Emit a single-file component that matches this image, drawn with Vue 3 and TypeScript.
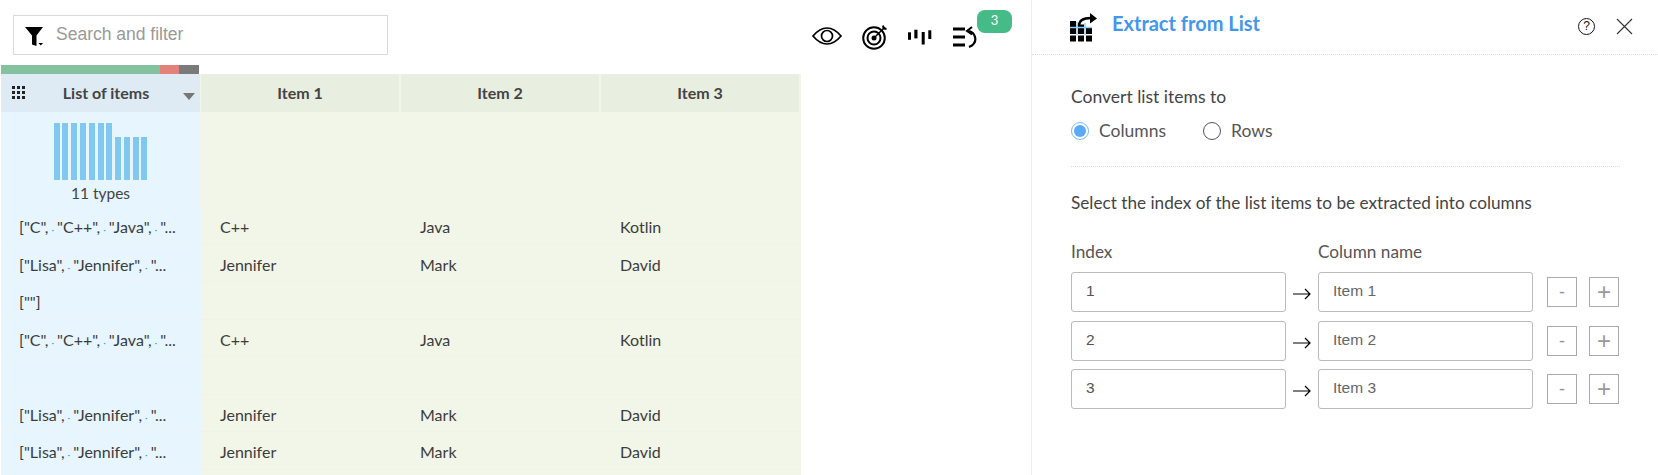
<script setup lang="ts">
const summaryBars = [57, 57, 57, 57, 57, 57, 57, 43, 43, 43, 43]
const headers = ['Item 1', 'Item 2', 'Item 3']

const cSet = ['C++', 'Java', 'Kotlin']
const nameSet = ['Jennifer', 'Mark', 'David']
const langs = ['["C",', '"C++",', '"Java",', '"...']
const names = ['["Lisa",', '"Jennifer",', '"...']
const blank = ['', '', '']

const rows = [
  { parts: langs, cells: cSet },
  { parts: names, cells: nameSet },
  { parts: ['[""]'], cells: blank },
  { parts: langs, cells: cSet },
  { parts: [], cells: blank },
  { parts: names, cells: nameSet },
  { parts: names, cells: nameSet },
  { parts: [], cells: blank },
]

const extractRows = [
  { index: '1', name: 'Item 1' },
  { index: '2', name: 'Item 2' },
  { index: '3', name: 'Item 3' },
]

const gridDots = [
  [0, 0], [0, 7], [0, 14.500],
  [8, 3.500], [8, 7], [8, 14.500],
  [16, 7], [16, 14.500],
]
</script>

<template>
  <div class="page">
    <section class="left">
      <div class="toolbar">
        <div class="search">
          <svg class="filter-icon" width="20" height="20" viewBox="0 0 20 20">
            <path d="M0 0h18l-6.500 8.500V19l-4.500-1.500V8.500z" fill="#000" />
            <path d="M13.500 16h4.500l-2.250 2.500z" fill="#000" />
          </svg>
          <span class="search-text">Search and filter</span>
        </div>
        <div class="tools">
          <svg class="eye" width="30" height="20" viewBox="0 0 30 20" fill="none" stroke="#000" stroke-width="1.700">
            <path d="M1 10C6 4 10 2 15 2s9 2 14 8c-5 6-9 8-14 8S6 16 1 10z" />
            <circle cx="15" cy="10" r="5.500" />
          </svg>
          <svg width="26" height="26" viewBox="0 0 26 26" fill="none" stroke="#000">
            <circle cx="12" cy="14" r="10.800" stroke-width="2" />
            <circle cx="12" cy="14" r="6.500" stroke-width="2" />
            <circle cx="12" cy="14" r="2.500" fill="#000" stroke="none" />
            <path d="M12 14L23 3" stroke-width="1.500" />
            <path d="M21 1.500l.5 3 3 .5" stroke-width="1.800" />
          </svg>
          <svg width="24" height="16" viewBox="0 0 24 16" fill="#000">
            <rect x="0" y="3.300" width="3" height="7.500" />
            <rect x="6.300" y="0.700" width="3.200" height="8.700" />
            <rect x="13.700" y="3" width="3" height="12.500" />
            <rect x="20.300" y="1.300" width="3" height="8.700" />
          </svg>
          <div class="history">
            <svg width="24" height="22" viewBox="0 0 24 22" fill="none" stroke="#000">
              <path d="M0 3h12M0 11h12M0 19h12" stroke-width="3" />
              <path d="M16 21c5-2 7-6 6-10-.7-3-3-5-6-6" stroke-width="2.200" />
              <path d="M19 1l-5 4 5 3.500" stroke-width="2" />
            </svg>
            <span class="badge">3</span>
          </div>
        </div>
      </div>

      <div class="table">
        <div class="quality">
          <span class="q-green"></span>
          <span class="q-red"></span>
          <span class="q-gray"></span>
        </div>
        <div class="grid">
          <div class="th th-main">
            <svg class="grip" width="14" height="14" viewBox="0 0 14 14" fill="#222">
              <template v-for="y in [0, 5, 10]" :key="y">
                <rect v-for="x in [0, 5, 10]" :key="x" :x="x" :y="y" width="3" height="3" />
              </template>
            </svg>
            <span>List of items</span>
            <i class="caret"></i>
          </div>
          <div v-for="h in headers" :key="h" class="th">{{ h }}</div>

          <div class="summary summary-main">
            <div class="bars">
              <span v-for="(b, i) in summaryBars" :key="i" :style="{ height: b + 'px' }"></span>
            </div>
            <div class="types">11 types</div>
          </div>
          <div v-for="h in headers" :key="h" class="summary"></div>

          <template v-for="(row, r) in rows" :key="r">
            <div class="td td-main">
              <template v-for="(p, i) in row.parts" :key="i">
                <span v-if="i > 0" class="ws">·</span>{{ p }}
              </template>
            </div>
            <div v-for="(c, i) in row.cells" :key="i" class="td">{{ c }}</div>
          </template>
        </div>
      </div>
    </section>

    <aside class="panel">
      <header class="panel-head">
        <svg width="27" height="29" viewBox="0 0 27 29">
          <rect
            v-for="(d, i) in gridDots"
            :key="i"
            :x="d[0]"
            :y="d[1] + 8"
            width="6"
            :height="d[1] === 3.500 ? 2.500 : 6"
            fill="#000"
          />
          <path d="M0 14.500h22M7 9v13M15 10v12" stroke="#8fcdf5" stroke-width="1.400" fill="none" />
          <path d="M9 13c0-5 4-8 12-8" stroke="#000" stroke-width="2.400" fill="none" />
          <path d="M20 0l7 5.500-7 5z" fill="#000" />
        </svg>
        <h1>Extract from List</h1>
        <div class="head-actions">
          <span class="help">?</span>
          <svg width="17" height="17" viewBox="0 0 17 17" stroke="#333" stroke-width="1.100">
            <path d="M1 1l15 15M16 1L1 16" />
          </svg>
        </div>
      </header>

      <div class="panel-body">
        <div class="convert">
          <div class="label">Convert list items to</div>
          <div class="radios">
            <label class="radio"><i class="dot on"></i>Columns</label>
            <label class="radio"><i class="dot"></i>Rows</label>
          </div>
        </div>
        <p class="hint">Select the index of the list items to be extracted into columns</p>
        <div class="col-labels">
          <span>Index</span>
          <span>Column name</span>
        </div>
        <div class="extract-rows">
          <div v-for="row in extractRows" :key="row.index" class="extract-row">
            <div class="field">{{ row.index }}</div>
            <svg class="arrow" width="18" height="12" viewBox="0 0 18 12" fill="none" stroke="#000" stroke-width="1.200">
              <path d="M0 6h17M12 1l5 5-5 5" />
            </svg>
            <div class="field name">{{ row.name }}</div>
            <div class="step">-</div>
            <div class="step plus">+</div>
          </div>
        </div>
      </div>
    </aside>
  </div>
</template>

<style>
html,
body {
  margin: 0;
  background: #fff;
}
</style>

<style scoped>
.page {
  display: flex;
  width: 1658px;
  height: 475px;
  overflow: hidden;
  font-family: Lato, "Liberation Sans", sans-serif;
  color: #333;
}

.left {
  width: 1032px;
  flex: none;
  border-right: 1px solid #eee;
  box-sizing: border-box;
}

.toolbar {
  display: flex;
  align-items: flex-start;
  height: 65px;
  padding-top: 15px;
  padding-left: 13px;
  box-sizing: border-box;
}

.search {
  display: flex;
  align-items: center;
  width: 375px;
  height: 40px;
  box-sizing: border-box;
  border: 1px solid #d9d9d9;
  padding: 0 0 2px 11px;
}

.filter-icon {
  margin-top: 6px;
}

.search-text {
  margin-left: 11px;
  font: 17.500px "Liberation Sans", sans-serif;
  color: #999;
}

.tools {
  display: flex;
  align-items: center;
  gap: 20px;
  margin-left: 424px;
  margin-top: 2px;
  height: 40px;
}

.eye {
  margin-top: -2px;
}

.history {
  position: relative;
  display: flex;
  margin-left: 1px;
}

.badge {
  position: absolute;
  left: 24px;
  top: -16px;
  width: 35px;
  height: 23px;
  border-radius: 8px;
  background: #45bb87;
  color: #fff;
  font-size: 13px;
  line-height: 21px;
  text-align: center;
}

.table {
  padding-left: 1px;
  width: 800px;
}

.quality {
  display: flex;
  width: 198px;
  height: 9px;
}

.q-green {
  width: 159px;
  background: #84c19f;
}

.q-red {
  width: 19px;
  background: #e3827a;
}

.q-gray {
  width: 20px;
  background: #7a7a7a;
}

.grid {
  display: grid;
  grid-template-columns: repeat(4, 200px);
  grid-auto-rows: 37.500px;
  grid-template-rows: 38px 95px;
  background: #f1f6e9;
}

.th {
  display: flex;
  align-items: center;
  justify-content: center;
  margin-right: 2px;
  padding-bottom: 2px;
  box-sizing: border-box;
  background: #e8eee0;
  font-size: 16px;
  font-weight: 700;
  color: #444;
}

.th-main {
  position: relative;
  background: #deebf4;
  padding-left: 11px;
  margin-right: 1px;
}

.grip {
  position: absolute;
  left: 11px;
  top: 12px;
}

.caret {
  position: absolute;
  right: 5px;
  top: 19px;
  border-left: 6px solid transparent;
  border-right: 6px solid transparent;
  border-top: 7px solid #777;
}

.summary {
  margin-right: 1px;
  background: #f1f6e9;
}

.summary-main {
  display: flex;
  flex-direction: column;
  align-items: center;
  background: #e6f5fe;
  padding-top: 11px;
  box-sizing: border-box;
}

.bars {
  display: flex;
  align-items: flex-end;
  gap: 2.800px;
  height: 57px;
}

.bars span {
  width: 6px;
  background: #80c8f0;
}

.types {
  margin-top: 4px;
  font-size: 15.500px;
  line-height: 18px;
  color: #444;
}

.td {
  padding: 3px 0 0 19px;
  display: flex;
  align-items: center;
  font-size: 16px;
  color: #3c3c3c;
  background: #f1f6e9;
  border-bottom: 1px solid #eff3e8;
  white-space: pre;
  box-sizing: border-box;
}

.td-main {
  background: #e6f5fe;
  border-bottom-color: #edf2f4;
  display: block;
  line-height: 36px;
  padding: 2px 0 0 18px;
}

.ws {
  color: #4a9be0;
  font-size: 10px;
  padding: 0 3px;
}

.panel {
  flex: 1;
  min-width: 0;
}

.panel-head {
  display: flex;
  align-items: center;
  height: 55px;
  box-sizing: border-box;
  padding-left: 38px;
  border-bottom: 1px dotted #ddd;
}

.panel-head h1 {
  margin: 0 0 9px 15px;
  font-size: 20px;
  font-weight: 700;
  color: #4496ec;
}

.head-actions {
  display: flex;
  align-items: center;
  gap: 21px;
  margin-left: auto;
  margin-right: 25px;
  margin-bottom: 2px;
}

.help {
  width: 15px;
  height: 15px;
  border: 1.500px solid #111;
  border-radius: 50%;
  font: 12px/15px "Liberation Sans", sans-serif;
  text-align: center;
  color: #111;
}

.panel-body {
  padding: 32px 38px 0 39px;
}

.convert {
  width: 549px;
  height: 80px;
  border-bottom: 1px dotted #ddd;
  box-sizing: border-box;
}

.label {
  font-size: 17.500px;
  line-height: 20px;
  color: #444;
}

.radios {
  display: flex;
  gap: 37px;
  margin-top: 14px;
}

.radio {
  display: flex;
  align-items: center;
  font-size: 17.500px;
  line-height: 20px;
  color: #555;
}

.dot {
  width: 16px;
  height: 16px;
  border: 1px solid #555;
  border-radius: 50%;
  margin-right: 10px;
  box-sizing: content-box;
}

.dot.on {
  width: 12px;
  height: 12px;
  border: 1px solid #7cb9f5;
  padding: 2px;
  background: #5aaaf8;
  background-clip: content-box;
}

.hint {
  margin: 26px 0 0;
  font-size: 17.200px;
  line-height: 20px;
  color: #444;
}

.col-labels {
  display: flex;
  margin-top: 29px;
  font-size: 17.200px;
  line-height: 20px;
  color: #555;
}

.col-labels span:first-child {
  width: 247px;
}

.extract-rows {
  margin-top: 10px;
  display: flex;
  flex-direction: column;
  gap: 8.500px;
}

.extract-row {
  display: flex;
  align-items: center;
  height: 40px;
}

.field {
  width: 215px;
  height: 40px;
  box-sizing: border-box;
  border: 1px solid #bbb;
  border-radius: 3px;
  padding-left: 14px;
  font: 15.500px/36px "Liberation Sans", sans-serif;
  color: #555;
}

.field.name {
  color: #666;
}

.arrow {
  margin: 4px 7px 0;
}

.step {
  width: 30px;
  height: 30px;
  box-sizing: border-box;
  border: 1px solid #aaa;
  margin-left: 14px;
  text-align: center;
  font: 18px/28px "Liberation Sans", sans-serif;
  color: #999;
}

.step.plus {
  margin-left: 12px;
  font-size: 24px;
}
</style>
